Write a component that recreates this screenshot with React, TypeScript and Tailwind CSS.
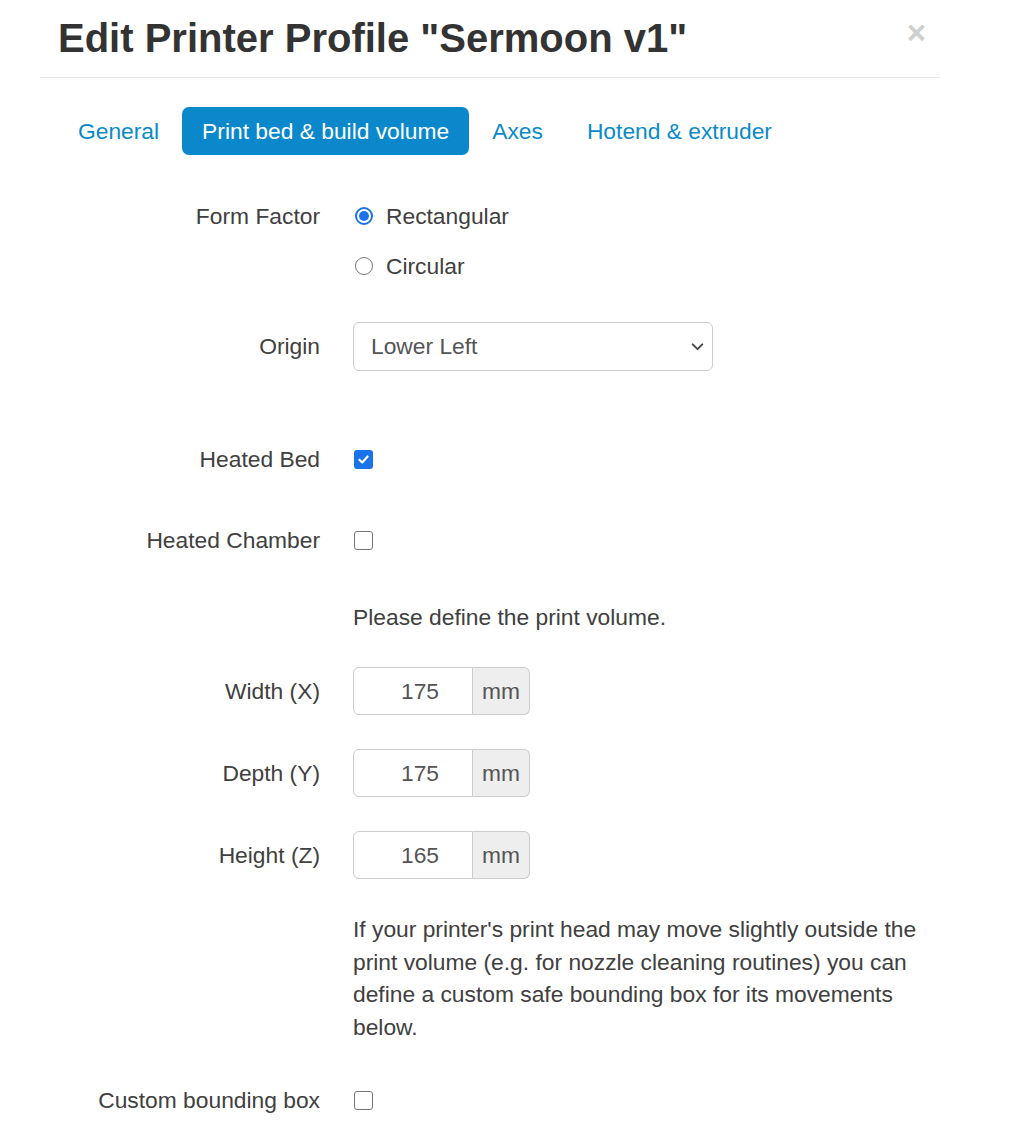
import React from 'react';

const font = { fontFamily: '"Liberation Sans", Arial, sans-serif' };

function Label({ children }: { children: React.ReactNode }) {
  return <div className="w-[261px] shrink-0 text-right pr-[1px]">{children}</div>;
}

function Radio({ checked }: { checked?: boolean }) {
  if (checked) {
    return (
      <span className="w-[18px] h-[18px] rounded-full border-[2px] border-[#1a73e8] flex items-center justify-center">
        <span className="w-[10px] h-[10px] rounded-full bg-[#1a73e8]" />
      </span>
    );
  }
  return <span className="w-[18px] h-[18px] rounded-full border border-[#767676] bg-white" />;
}

function Checkbox({ checked }: { checked?: boolean }) {
  if (checked) {
    return (
      <span className="w-[19px] h-[19px] rounded-[3px] bg-[#1a73e8] flex items-center justify-center">
        <svg width="13" height="13" viewBox="0 0 12 12" fill="none">
          <path d="M2.2 6.3 L4.8 8.8 L9.8 3.2" stroke="white" strokeWidth="2" strokeLinecap="round" strokeLinejoin="round" />
        </svg>
      </span>
    );
  }
  return <span className="w-[19px] h-[19px] rounded-[3px] border border-[#767676] bg-white" />;
}

function SizeRow({ label, value, className }: { label: string; value: string; className: string }) {
  return (
    <div className={`flex items-center ${className}`}>
      <Label>{label}</Label>
      <div className="ml-[32px] flex h-[48px]">
        <div className="w-[120px] border border-[#ccc] rounded-l-[6px] flex items-center justify-center pl-[14px] text-[#555]">
          {value}
        </div>
        <div className="w-[57px] border border-l-0 border-[#ccc] rounded-r-[6px] bg-[#eee] flex items-center justify-center text-[#555]">
          mm
        </div>
      </div>
    </div>
  );
}

export default function App() {
  return (
    <div className="bg-white w-[1023px] h-[1134px] overflow-hidden text-[#404040] text-[22.8px] leading-[32.6px]" style={font}>
      <div className="ml-[40px] w-[900px]">
        <div className="h-[78px] border-b border-[#e8e8e8] flex justify-between pl-[18px] pr-[14px]">
          <h3 className="text-[40px] font-bold leading-[40px] pt-[18px] text-[#333]">Edit Printer Profile "Sermoon v1"</h3>
          <span className="text-[33px] font-bold text-[#cfcfcf] leading-[33px] pt-[16px]">×</span>
        </div>

        <div className="pt-[29px]">
          <div className="pl-[18px] flex items-center h-[48px] gap-[3px] text-[#0a8ac8]">
            <span className="px-[20px]">General</span>
            <span className="px-[20px] h-[48px] flex items-center bg-[#0b88cc] text-white rounded-[7px]">Print bed &amp; build volume</span>
            <span className="px-[20px]">Axes</span>
            <span className="px-[21px]">Hotend &amp; extruder</span>
          </div>

          <div className="pl-[20px]">
            <div className="flex mt-[36px]">
              <div className="flex items-center h-[50px]">
                <Label>Form Factor</Label>
              </div>
              <div className="ml-[32px] flex flex-col">
                <div className="flex items-center h-[50px] gap-[13px] pl-[2px]">
                  <Radio checked />
                  <span>Rectangular</span>
                </div>
                <div className="flex items-center h-[50px] gap-[13px] pl-[2px]">
                  <Radio />
                  <span>Circular</span>
                </div>
              </div>
            </div>

            <div className="flex items-center mt-[31px]">
              <Label>Origin</Label>
              <div className="ml-[32px] w-[360px] h-[49px] border border-[#ccc] rounded-[6px] flex items-center justify-between pl-[17px] pr-[7px] text-[#555]">
                <span>Lower Left</span>
                <svg width="15" height="15" viewBox="0 0 14 14" fill="none">
                  <path d="M2.5 5 L7 9.5 L11.5 5" stroke="#444" strokeWidth="1.8" strokeLinecap="round" strokeLinejoin="round" />
                </svg>
              </div>
            </div>

            <div className="flex items-center h-[40px] mt-[68px]">
              <Label>Heated Bed</Label>
              <div className="ml-[33px] flex items-center">
                <Checkbox checked />
              </div>
            </div>

            <div className="flex items-center h-[40px] mt-[41px]">
              <Label>Heated Chamber</Label>
              <div className="ml-[33px] flex items-center">
                <Checkbox />
              </div>
            </div>

            <div className="flex items-center h-[40px] mt-[37px]">
              <div className="w-[261px] shrink-0" />
              <div className="ml-[32px]">Please define the print volume.</div>
            </div>

            <SizeRow label="Width (X)" value="175" className="mt-[30px]" />
            <SizeRow label="Depth (Y)" value="175" className="mt-[34px]" />
            <SizeRow label="Height (Z)" value="165" className="mt-[34px]" />

            <div className="flex mt-[34px]">
              <div className="w-[261px] shrink-0" />
              <p className="ml-[32px] w-[585px]">
                If your printer's print head may move slightly outside the print volume (e.g. for nozzle cleaning routines) you can define a custom safe bounding box for its movements below.
              </p>
            </div>

            <div className="flex items-center h-[40px] mt-[37px]">
              <Label>Custom bounding box</Label>
              <div className="ml-[33px] flex items-center">
                <Checkbox />
              </div>
            </div>
          </div>
        </div>
      </div>
    </div>
  );
}
